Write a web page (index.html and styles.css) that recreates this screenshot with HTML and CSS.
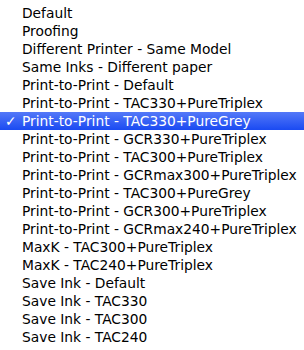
FILE: index.html
```html
<!DOCTYPE html>
<html lang="en">
<head>
    <meta charset="UTF-8">
    <meta name="viewport" content="width=device-width, initial-scale=1.0">
    <title>Profile Menu</title>
    <link rel="stylesheet" href="styles.css">
</head>
<body>
    <ul class="menu">
        <li class="item">Default</li>
        <li class="item">Proofing</li>
        <li class="item">Different Printer - Same Model</li>
        <li class="item">Same Inks - Different paper</li>
        <li class="item">Print-to-Print - Default</li>
        <li class="item">Print-to-Print - TAC330+PureTriplex</li>
        <li class="item selected"><span class="check">✓</span>Print-to-Print - TAC330+PureGrey</li>
        <li class="item">Print-to-Print - GCR330+PureTriplex</li>
        <li class="item">Print-to-Print - TAC300+PureTriplex</li>
        <li class="item">Print-to-Print - GCRmax300+PureTriplex</li>
        <li class="item">Print-to-Print - TAC300+PureGrey</li>
        <li class="item">Print-to-Print - GCR300+PureTriplex</li>
        <li class="item">Print-to-Print - GCRmax240+PureTriplex</li>
        <li class="item">MaxK - TAC300+PureTriplex</li>
        <li class="item">MaxK - TAC240+PureTriplex</li>
        <li class="item">Save Ink - Default</li>
        <li class="item">Save Ink - TAC330</li>
        <li class="item">Save Ink - TAC300</li>
        <li class="item">Save Ink - TAC240</li>
    </ul>
</body>
</html>
```

FILE: styles.css
```css
* {
    margin: 0;
    padding: 0;
    box-sizing: border-box;
}
body {
    background: #fff;
    font-family: "DejaVu Sans", sans-serif;
    font-size: 13.8px;
    color: #000;
}
.menu {
    list-style: none;
    padding-top: 4px;
}
.item {
    position: relative;
    height: 18px;
    line-height: 18px;
    padding-left: 22px;
    white-space: nowrap;
}
.selected {
    background: linear-gradient(#5479f8, #1a4af2);
    color: #fff;
}
.check {
    position: absolute;
    left: 5px;
    top: 0;
}
```
